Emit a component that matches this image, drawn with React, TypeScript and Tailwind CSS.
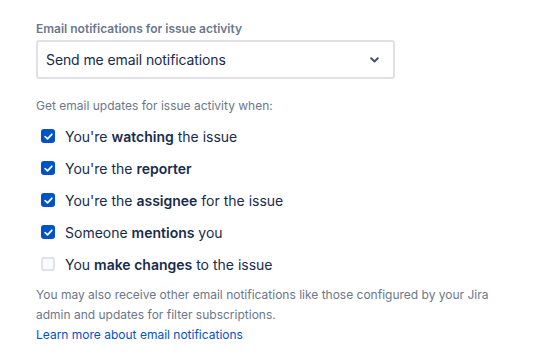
const options = [
  { pre: "You're ", bold: "watching", post: " the issue", checked: true },
  { pre: "You're the ", bold: "reporter", post: "", checked: true },
  { pre: "You're the ", bold: "assignee", post: " for the issue", checked: true },
  { pre: "Someone ", bold: "mentions", post: " you", checked: true },
  { pre: "You ", bold: "make changes", post: " to the issue", checked: false },
];

function Checkbox({ checked }: { checked: boolean }) {
  if (!checked) {
    return <span className="w-[14px] h-[14px] rounded-[3px] border-2 border-[#dfe1e6] bg-[#fafbfc]" />;
  }
  return (
    <span className="w-[14px] h-[14px] rounded-[3px] bg-[#0052cc] flex items-center justify-center">
      <svg width="9" height="7" viewBox="0 0 9 7" fill="none">
        <path d="M1.2 3.6 L3.5 5.8 L7.8 1.3" stroke="white" strokeWidth="1.8" strokeLinecap="round" strokeLinejoin="round" />
      </svg>
    </span>
  );
}

export default function App() {
  return (
    <div className="w-[540px] h-[354px] bg-white pt-[21px] px-9 font-['Inter',sans-serif] text-[#172b4d]">
      <label className="block text-[12px] font-semibold text-[#6b778c] leading-4 mb-[3px]">
        Email notifications for issue activity
      </label>
      <div className="w-[359px] h-[39px] border-2 border-[#dfe1e6] rounded-[3px] flex items-center justify-between pl-2 pr-[14px]">
        <span className="text-[14px] tracking-[-0.1px]">Send me email notifications</span>
        <svg width="9" height="6" viewBox="0 0 9 6" fill="none">
          <path d="M1.2 1.2 L4.5 4.5 L7.8 1.2" stroke="#42526e" strokeWidth="2" strokeLinecap="round" strokeLinejoin="round" />
        </svg>
      </div>
      <p className="mt-[17px] text-[12px] text-[#6b778c] leading-5">Get email updates for issue activity when:</p>
      <div className="mt-[8px] flex flex-col gap-2">
        {options.map((o) => (
          <div key={o.bold} className="flex items-center h-6 pl-[5px] gap-[10px] text-[14px]">
            <Checkbox checked={o.checked} />
            <span>
              {o.pre}
              <b className="font-semibold">{o.bold}</b>
              {o.post}
            </span>
          </div>
        ))}
      </div>
      <p className="mt-[9px] text-[12px] text-[#6b778c] leading-5">
        You may also receive other email notifications like those configured by your Jira admin and updates for filter
        subscriptions.
      </p>
      <a className="block text-[12px] text-[#0052cc] leading-5">Learn more about email notifications</a>
    </div>
  );
}
